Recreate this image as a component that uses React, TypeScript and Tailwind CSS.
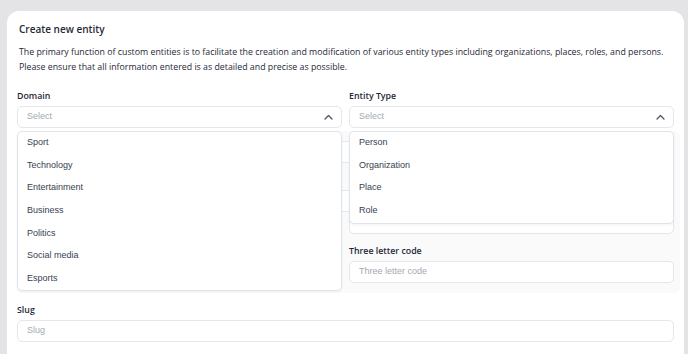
import React from "react";

const domains = ["Sport", "Technology", "Entertainment", "Business", "Politics", "Social media", "Esports"];
const entityTypes = ["Person", "Organization", "Place", "Role"];

const ChevronUp = () => (
  <svg width="9" height="6" viewBox="0 0 9 6" fill="none" className="text-gray-600">
    <path d="M1 5L4.5 1.5L8 5" stroke="currentColor" strokeWidth="1.3" strokeLinecap="round" strokeLinejoin="round" />
  </svg>
);

const SelectBox = ({ label, options }: { label: string; options: string[] }) => (
  <div className="relative flex flex-col">
    <label className="mb-[2px] text-[8.8px] leading-[16px] font-semibold text-[#1f2937]">{label}</label>
    <div className="flex h-[22px] items-center justify-between rounded-[5px] border border-[#e5e7eb] bg-white pr-[8px] pl-[9px]">
      <span className="font-['Liberation_Sans',sans-serif] text-[9px] text-[#a3a9b3]">Select</span>
      <ChevronUp />
    </div>
    {/* lista aberta */}
    <div className="absolute top-[43px] right-0 left-0 z-10 rounded-[5px] border border-[#dfe4ec] bg-white shadow-[0_1px_3px_rgba(0,0,0,0.05)]">
      {options.map((o) => (
        <div key={o} className="flex h-[22.65px] items-center pb-[1px] pl-[9px] font-['Liberation_Sans',sans-serif] text-[9px] text-[#374151]">
          {o}
        </div>
      ))}
    </div>
  </div>
);

const Input = ({ placeholder, className = "" }: { placeholder?: string; className?: string }) => (
  <div className={`flex h-[22px] items-center rounded-[5px] border border-[#e5e7eb] bg-white pl-[9px] ${className}`}>
    <span className="font-['Liberation_Sans',sans-serif] text-[9px] text-[#a3a9b3]">{placeholder}</span>
  </div>
);

export default function App() {
  return (
    <div className="h-[354px] overflow-hidden bg-[#e4e4e6] pt-[11px] pr-[4px] pl-[7px] font-['Open_Sans',sans-serif]">
      <div className="h-[400px] rounded-t-[12px] bg-white pr-[10px] pl-[10px]">
        <h1 className="pt-[10px] pl-[2px] text-[10px] leading-[16px] font-semibold text-[#1f2937]">Create new entity</h1>
        <p className="mt-[8px] pl-[2px] text-[8.8px] leading-[15px] text-[#1f2937]">
          The primary function of custom entities is to facilitate the creation and modification of various entity types including organizations, places, roles, and persons.
          <br />
          Please ensure that all information entered is as detailed and precise as possible.
        </p>

        <div className="mt-[13px] grid grid-cols-2 gap-[7px]">
          <SelectBox label="Domain" options={domains} />
          <SelectBox label="Entity Type" options={entityTypes} />
        </div>

        {/* secção por baixo das listas */}
        <div className="mt-[3px] -mr-[6px] flex flex-col rounded-[6px] bg-[#fafafa] pt-[10px] pr-[6px] pb-[10px]">
          <Input />
          <Input className="mt-[27px]" />
          <div className="grid grid-cols-2 gap-[7px]">
            <div />
            <div className="flex flex-col">
              <Input />
              <label className="mt-[9px] mb-[2px] text-[8.8px] leading-[16px] font-semibold text-[#1f2937]">Three letter code</label>
              <Input placeholder="Three letter code" />
            </div>
          </div>
        </div>

        <div className="mt-[9px] flex flex-col">
          <label className="mb-[2px] text-[8.8px] leading-[16px] font-semibold text-[#1f2937]">Slug</label>
          <Input placeholder="Slug" />
        </div>
      </div>
    </div>
  );
}
